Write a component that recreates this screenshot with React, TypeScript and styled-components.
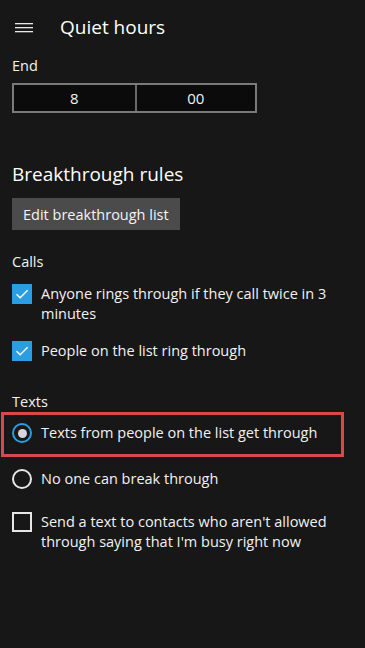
import styled, { createGlobalStyle } from 'styled-components'

const GlobalStyle = createGlobalStyle`
  html, body {
    margin: 0;
    padding: 0;
    background: #171717;
  }
  body {
    font-family: 'Open Sans', 'Noto Sans', sans-serif;
    color: #f2f2f2;
  }
`

const Page = styled.div`
  width: 365px;
  min-height: 648px;
  box-sizing: border-box;
  padding: 0 12px 40px 12px;
  background: #171717;
`

const Header = styled.div`
  display: flex;
  flex-flow: row nowrap;
  align-items: center;
  height: 56px;
  margin-left: -12px;
`

const MenuButton = styled.div`
  width: 60px;
  height: 56px;
  display: flex;
  align-items: center;
  padding-left: 15px;
  box-sizing: border-box;
`

const Title = styled.div`
  font-size: 19px;
  line-height: 28px;
  color: #ffffff;
  margin-top: -2px;
`

const Label = styled.div<{ $top?: number }>`
  font-size: 14.5px;
  line-height: 20px;
  margin-top: ${({ $top }) => $top ?? 0}px;
`

const TimePicker = styled.div`
  display: grid;
  grid-template-columns: 1fr 1fr;
  width: 245px;
  height: 30px;
  box-sizing: border-box;
  margin-top: 7px;
  border: 2px solid #7a7a7a;
  background: #0b0b0b;
`

const TimeCell = styled.div<{ $divider?: boolean }>`
  display: flex;
  align-items: center;
  justify-content: center;
  font-size: 15px;
  border-left: ${({ $divider }) => ($divider ? '2px solid #6a6a6a' : 'none')};
`

const SectionTitle = styled.div`
  font-size: 19px;
  line-height: 28px;
  margin-top: 47px;
  color: #ffffff;
`

const Button = styled.div`
  display: inline-flex;
  align-items: center;
  height: 32px;
  padding: 0 11px;
  margin-top: 10px;
  background: #4b4b4b;
  font-size: 14.5px;
  color: #f4f4f4;
`

const Row = styled.div<{ $top: number }>`
  display: flex;
  flex-flow: row nowrap;
  align-items: flex-start;
  gap: 9px;
  margin-top: ${({ $top }) => $top}px;
`

const RowText = styled.div`
  font-size: 14.5px;
  line-height: 20px;
  flex: 1;
`

const Box = styled.div<{ $checked?: boolean }>`
  flex: none;
  width: 20px;
  height: 20px;
  box-sizing: border-box;
  display: flex;
  align-items: center;
  justify-content: center;
  background: ${({ $checked }) => ($checked ? '#2b9de2' : 'transparent')};
  border: ${({ $checked }) => ($checked ? 'none' : '2px solid #e6e6e6')};
`

const Radio = styled.div<{ $checked?: boolean }>`
  flex: none;
  width: 20px;
  height: 20px;
  box-sizing: border-box;
  border-radius: 50%;
  border: 2px solid ${({ $checked }) => ($checked ? '#2b9de2' : '#e6e6e6')};
  display: flex;
  align-items: center;
  justify-content: center;

  &::after {
    content: '';
    display: ${({ $checked }) => ($checked ? 'block' : 'none')};
    width: 9px;
    height: 9px;
    border-radius: 50%;
    background: #d6d6dc;
  }
`

const Highlight = styled.div`
  margin: 0 9px 0 -11px;
  padding: 8px 8px 11px 8px;
  border: 3px solid #d8494a;
`

function Check() {
  return (
    <svg width="16" height="16" viewBox="0 0 16 16">
      <path d="M2.5 8.2 L6.2 11.8 L13.6 4.2" fill="none" stroke="#ffffff" strokeWidth="1.4" />
    </svg>
  )
}

function Hamburger() {
  return (
    <svg width="18" height="10" viewBox="0 0 18 10">
      <rect x="0" y="0" width="18" height="1.3" fill="#e8e8e8" />
      <rect x="0" y="4" width="18" height="1.3" fill="#e8e8e8" />
      <rect x="0" y="8" width="18" height="1.3" fill="#e8e8e8" />
    </svg>
  )
}

export default function App() {
  return (
    <>
      <GlobalStyle />
      <Page>
        <Header>
          <MenuButton>
            <Hamburger />
          </MenuButton>
          <Title>Quiet hours</Title>
        </Header>
        <Label>End</Label>
        <TimePicker>
          <TimeCell>8</TimeCell>
          <TimeCell $divider>00</TimeCell>
        </TimePicker>

        <SectionTitle>Breakthrough rules</SectionTitle>
        <Button>Edit breakthrough list</Button>

        <Label $top={22}>Calls</Label>
        <Row $top={12}>
          <Box $checked>
            <Check />
          </Box>
          <RowText>Anyone rings through if they call twice in 3 minutes</RowText>
        </Row>
        <Row $top={17}>
          <Box $checked>
            <Check />
          </Box>
          <RowText>People on the list ring through</RowText>
        </Row>

        <Label $top={31}>Texts</Label>
        <Highlight>
          <Row $top={0}>
            <Radio $checked />
            <RowText>Texts from people on the list get through</RowText>
          </Row>
        </Highlight>
        <Row $top={12}>
          <Radio />
          <RowText>No one can break through</RowText>
        </Row>
        <Row $top={23}>
          <Box />
          <RowText>Send a text to contacts who aren't allowed through saying that I'm busy right now</RowText>
        </Row>
      </Page>
    </>
  )
}
